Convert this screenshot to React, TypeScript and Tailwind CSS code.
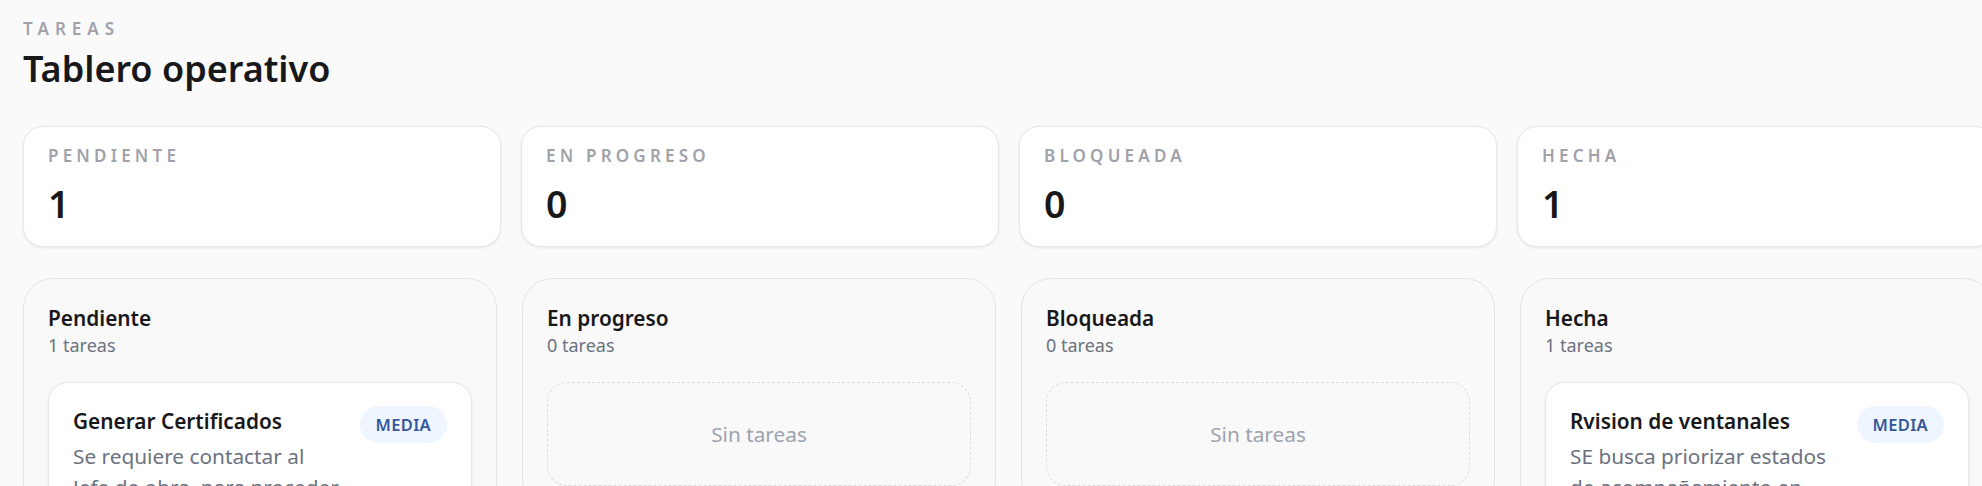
import React from "react";

const stats = [
  { label: "PENDIENTE", value: "1" },
  { label: "EN PROGRESO", value: "0" },
  { label: "BLOQUEADA", value: "0" },
  { label: "HECHA", value: "1" },
];

type Task = { title: string; desc: string; priority: string };

const columns: { name: string; tasks: Task[] }[] = [
  {
    name: "Pendiente",
    tasks: [
      {
        title: "Generar Certificados",
        desc: "Se requiere contactar al Jefe de obra, para proceder con la emisión de certificados",
        priority: "MEDIA",
      },
    ],
  },
  { name: "En progreso", tasks: [] },
  { name: "Bloqueada", tasks: [] },
  {
    name: "Hecha",
    tasks: [
      {
        title: "Rvision de ventanales",
        desc: "SE busca priorizar estados de acompañamiento en obra",
        priority: "MEDIA",
      },
    ],
  },
];

function TaskCard({ task }: { task: Task }) {
  return (
    <div className="rounded-[20px] border border-[#e7e7e9] bg-white px-[24px] pt-[23.5px] pb-[24px] shadow-[0_1px_3px_rgba(0,0,0,0.07)]">
      <div className="flex items-start justify-between gap-[20px]">
        <div className="min-w-0 flex-1">
          <div className="text-[20.8px] font-semibold leading-[30px] text-[#18181b]">{task.title}</div>
          <div className="mt-[5px] text-[20.8px] leading-[31px] text-[#6b7280]">{task.desc}</div>
        </div>
        <span className="shrink-0 rounded-full bg-[#eff6ff] px-[16px] py-[6px] text-[16.5px] font-semibold leading-[25px] tracking-[0.02em] text-[#34589a]">
          {task.priority}
        </span>
      </div>
    </div>
  );
}

export default function App() {
  return (
    <div
      className="h-screen w-full overflow-hidden bg-[#fafafa]"
      style={{ fontFamily: '"Noto Sans", "Open Sans", sans-serif' }}
    >
      <div className="pl-[23px] pt-[18px]">
        <div className="text-[17px] font-semibold leading-[22px] tracking-[6px] text-[#a1a1aa]">TAREAS</div>
        <h1 className="mt-[7px] text-[36px] font-semibold leading-[44px] text-[#18181b]">Tablero operativo</h1>

        <div className="mt-[35px] flex gap-[20px]">
          {stats.map((s) => (
            <div
              key={s.label}
              className="w-[478px] shrink-0 rounded-[20px] border border-[#e7e7e9] bg-white px-[24px] pt-[17.5px] pb-[20.5px] shadow-[0_1px_3px_rgba(0,0,0,0.08)]"
            >
              <div className="text-[17px] font-semibold leading-[22px] tracking-[4.2px] text-[#a1a1aa]">{s.label}</div>
              <div className="mt-[14px] text-[37.5px] font-semibold leading-[45px] text-[#18181b]">{s.value}</div>
            </div>
          ))}
        </div>

        <div className="mt-[31px] flex items-start gap-[25px]">
          {columns.map((c) => (
            <div
              key={c.name}
              className="w-[474px] shrink-0 rounded-[30px] border border-[#e4e4e7] bg-[#f9f9f9] px-[24px] pt-[23.5px] pb-[24px]"
            >
              <div className="text-[20.8px] font-semibold leading-[30px] text-[#18181b]">{c.name}</div>
              <div className="text-[18px] leading-[25px] text-[#6b7280]">{c.tasks.length} tareas</div>
              <div className="mt-[24px] flex flex-col gap-[16px]">
                {c.tasks.length === 0 ? (
                  <div className="flex h-[104px] items-center justify-center rounded-[20px] border border-dashed border-[#dcdce0] text-[20.8px] leading-[30px] text-[#9ca3af]">
                    Sin tareas
                  </div>
                ) : (
                  c.tasks.map((t) => <TaskCard key={t.title} task={t} />)
                )}
              </div>
            </div>
          ))}
        </div>
      </div>
    </div>
  );
}
